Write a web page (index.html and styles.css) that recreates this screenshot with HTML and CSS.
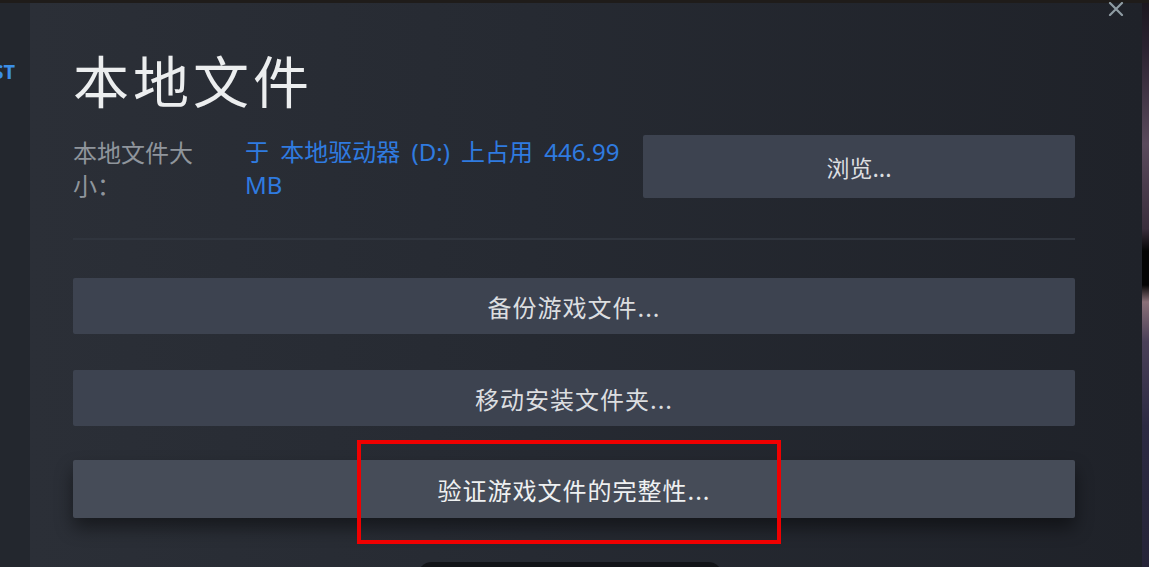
FILE: index.html
```html
<!DOCTYPE html>
<html lang="zh-CN">
<head>
<meta charset="utf-8">
<title>本地文件</title>
<link rel="stylesheet" href="styles.css">
</head>
<body>
<div class="app">
  <div class="topbar"></div>
  <div class="main">
    <aside class="sidebar"><span class="side-text">ST</span></aside>
    <section class="dialog">
      <button class="close" aria-label="关闭">
        <svg width="16" height="14" viewBox="0 0 16 14"><path d="M2 1 L14 13 M14 1 L2 13" stroke="#8f9ca3" stroke-width="2.2" stroke-linecap="round"/></svg>
      </button>
      <h1 class="title">本地文件</h1>
      <div class="info-row">
        <div class="info-label">本地文件大小：</div>
        <div class="info-value">于 本地驱动器 (D:) 上占用 446.99 MB</div>
        <button class="btn btn-browse">浏览...</button>
      </div>
      <div class="separator"></div>
      <div class="actions">
        <button class="btn btn-wide">备份游戏文件...</button>
        <button class="btn btn-wide">移动安装文件夹...</button>
        <button class="btn btn-wide btn-hover">验证游戏文件的完整性...</button>
      </div>
    </section>
    <div class="edge"></div>
  </div>
</div>
<div class="highlight"></div>
<div class="bottom-pill"></div>
</body>
</html>
```

FILE: styles.css
```css
html, body {
  margin: 0;
  padding: 0;
}
body {
  width: 1149px;
  height: 567px;
  overflow: hidden;
  background: #000;
  position: relative;
  font-family: "Noto Sans", "Noto Sans CJK SC", sans-serif;
}
.app {
  display: flex;
  flex-direction: column;
  height: 567px;
}
.topbar {
  height: 3px;
  background: #1f1c1a;
  flex: none;
}
.main {
  display: flex;
  flex: 1;
  min-height: 0;
}
.sidebar {
  width: 30px;
  flex: none;
  background: #23272e;
  overflow: hidden;
  display: flex;
  justify-content: flex-end;
  padding-top: 58px;
  box-sizing: border-box;
  padding-right: 15px;
  align-items: flex-start;
}
.side-text {
  color: #3b8ee6;
  font-weight: 700;
  font-size: 20px;
  line-height: 22px;
  white-space: nowrap;
}
.dialog {
  flex: 1;
  position: relative;
  background: linear-gradient(90deg, #2b2f37 0%, #262a32 45%, #1f2229 100%);
  padding: 48px 67px 0 43px;
  display: flex;
  flex-direction: column;
}
.close {
  position: absolute;
  top: -1px;
  right: 18px;
  background: none;
  border: 0;
  padding: 0;
  width: 16px;
  height: 14px;
  display: block;
}
.close svg { display: block; }
.title {
  margin: 0;
  font-family: "Noto Sans CJK SC", sans-serif;
  font-weight: 400;
  font-size: 56px;
  line-height: 56px;
  letter-spacing: 4px;
  color: #eceeef;
}
.info-row {
  display: flex;
  align-items: flex-start;
  margin-top: 28px;
}
.info-label {
  width: 130px;
  margin-right: 42px;
  flex: none;
  color: #8f959c;
  font-family: "Noto Sans CJK SC", sans-serif;
  font-size: 24px;
  line-height: 33px;
}
.info-value {
  width: 385px;
  margin-right: 13px;
  flex: none;
  color: #2f7be0;
  font-size: 24px;
  line-height: 33px;
  word-spacing: 5px;
}
.btn {
  border: 0;
  border-radius: 2px;
  background: #3d4350;
  color: #dcdee0;
  font-family: "Noto Sans CJK SC", sans-serif;
  font-size: 24px;
  letter-spacing: 1px;
  display: flex;
  align-items: center;
  justify-content: center;
  padding: 0;
}
.btn-browse {
  flex: 1;
  height: 63px;
  font-size: 23px;
  letter-spacing: 0;
}
.separator {
  height: 2px;
  background: #30353e;
  margin-top: 37px;
}
.actions {
  display: flex;
  flex-direction: column;
  gap: 36px;
  margin-top: 38px;
}
.btn-wide {
  height: 56px;
}
.btn-hover {
  height: 58px;
  margin-top: -2px;
  background: #464c58;
  color: #eef0f1;
  box-shadow: 0 10px 18px rgba(0, 0, 0, 0.45);
}
.edge {
  width: 7px;
  flex: none;
  background: linear-gradient(180deg, #1c1820 0%, #2a2230 8%, #5a4a5c 25%, #3a2e3c 40%, #050505 44%, #050505 50%, #8a7078 53%, #4a4058 60%, #2c2a42 75%, #262438 100%);
}
.highlight {
  position: absolute;
  left: 357px;
  top: 440px;
  width: 424px;
  height: 104px;
  box-sizing: border-box;
  border: 4px solid #f00000;
  pointer-events: none;
}
.bottom-pill {
  position: absolute;
  left: 417px;
  top: 562px;
  width: 306px;
  height: 30px;
  border-radius: 15px;
  background: #121418;
}
```
